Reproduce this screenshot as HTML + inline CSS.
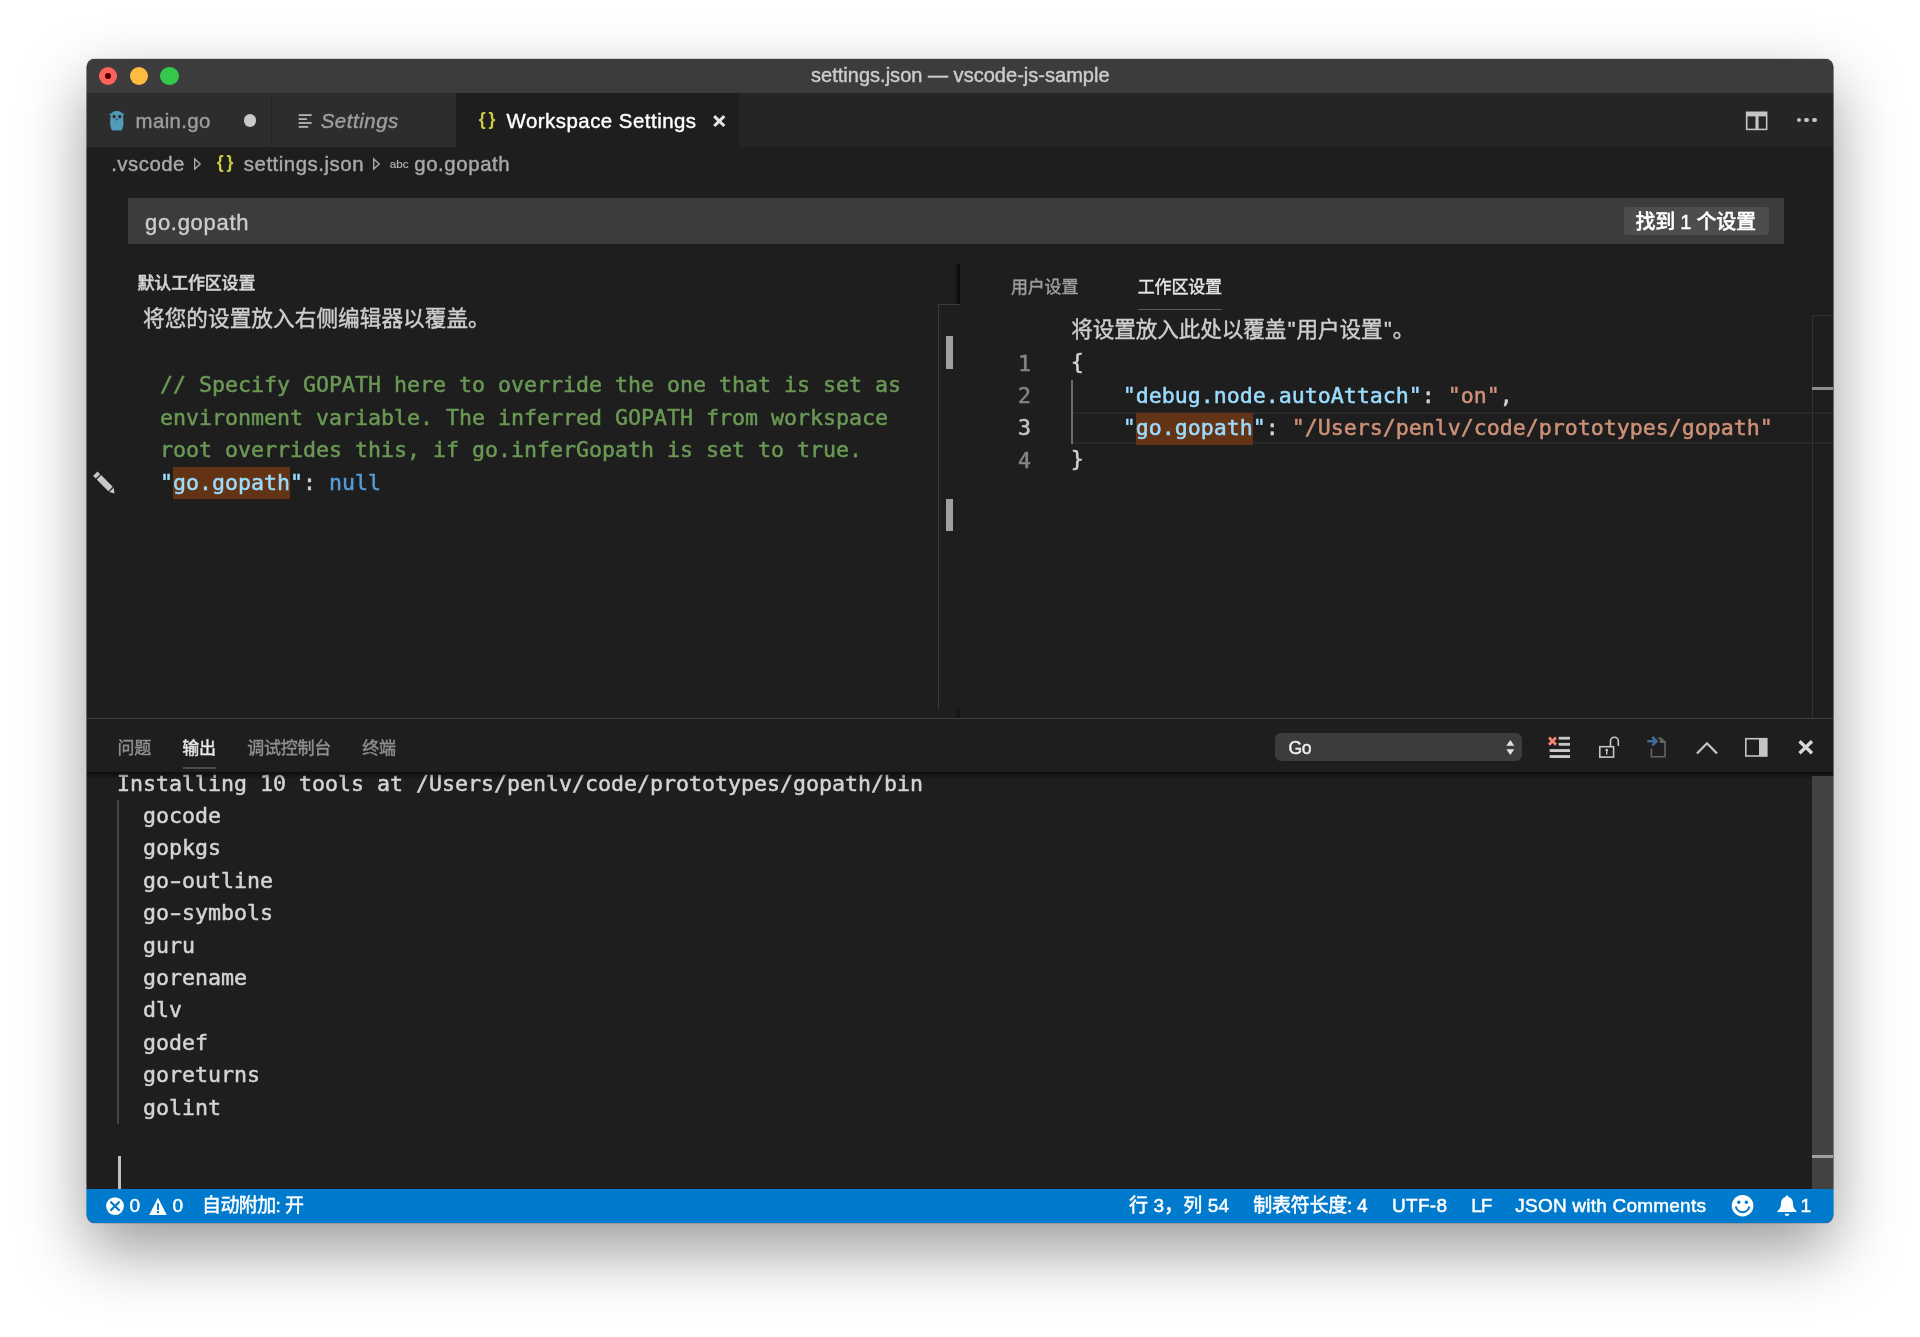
<!DOCTYPE html>
<html lang="zh-CN">
<head>
<meta charset="utf-8">
<title>settings.json — vscode-js-sample</title>
<style>
html,body{margin:0;padding:0;}
body{width:1920px;height:1337px;background:#fff;position:relative;overflow:hidden;
  font-family:"Liberation Sans","Noto Sans CJK SC",sans-serif;-webkit-font-smoothing:antialiased;}
#shadow{position:absolute;left:87px;top:59px;width:1746px;height:1164px;border-radius:7.5px;
  box-shadow:0 0 0 1px rgba(0,0,0,.12),0 27px 66px 0 rgba(0,0,0,.40);}
#win{position:absolute;left:87px;top:59px;width:1746px;height:1164px;border-radius:7.5px;overflow:hidden;background:#1e1e1e;}
#c{position:absolute;left:-87px;top:-59px;width:1920px;height:1337px;will-change:transform;}
#c div,#c span,#c svg{position:absolute;}
.t{white-space:pre;line-height:1;font-size:20.06px;color:#ccc;-webkit-text-stroke:.42px currentColor;}
.m{white-space:pre;font-family:"DejaVu Sans Mono","Liberation Mono",monospace;font-size:21.6px;line-height:32.4px;color:#d4d4d4;-webkit-text-stroke:.5px currentColor;}
.m span,.t span{position:static !important;}
/* colours */
.cm{color:#6a9955}.ky{color:#9cdcfe}.st{color:#ce9178}.kw{color:#569cd6}.pn{color:#d4d4d4}
.hl{background:#623315}
.s{font-size:19px !important;color:#fff !important;-webkit-text-stroke:.5px #fff !important;}
</style>
</head>
<body>
<div id="shadow"></div>
<div id="edges" style="position:absolute;left:0;top:0;opacity:.5;">
<div style="position:absolute;left:86px;top:66px;width:1px;height:27px;background:#3c3c3c;"></div>
<div style="position:absolute;left:86px;top:93px;width:1px;height:54px;background:#2d2d2d;"></div>
<div style="position:absolute;left:86px;top:147px;width:1px;height:1042px;background:#1e1e1e;"></div>
<div style="position:absolute;left:86px;top:1189px;width:1px;height:27px;background:#007acc;"></div>
<div style="position:absolute;left:1833px;top:66px;width:1px;height:27px;background:#3c3c3c;"></div>
<div style="position:absolute;left:1833px;top:93px;width:1px;height:54px;background:#252526;"></div>
<div style="position:absolute;left:1833px;top:147px;width:1px;height:629px;background:#1e1e1e;"></div>
<div style="position:absolute;left:1833px;top:776px;width:1px;height:413px;background:#424242;"></div>
<div style="position:absolute;left:1833px;top:1189px;width:1px;height:27px;background:#007acc;"></div>
</div>
<div id="win"><div id="c">

<!-- ===== title bar ===== -->
<div style="left:87px;top:59px;width:1747px;height:34px;background:#3c3c3c;"></div>
<div style="left:98.8px;top:66.6px;width:18.4px;height:18.4px;border-radius:50%;background:#fc615d;"></div>
<div style="left:104.9px;top:72.7px;width:6.2px;height:6.2px;border-radius:50%;background:#4d0000;"></div>
<div style="left:129.5px;top:66.6px;width:18.4px;height:18.4px;border-radius:50%;background:#fdbc40;"></div>
<div style="left:160.4px;top:66.6px;width:18.4px;height:18.4px;border-radius:50%;background:#34c84a;"></div>
<span class="t" id="title" style="left:811px;top:65px;color:#cccccc;">settings.json — vscode-js-sample</span>

<!-- ===== tab bar ===== -->
<div style="left:87px;top:93px;width:1747px;height:54px;background:#252526;"></div>
<div style="left:87px;top:93px;width:184px;height:54px;background:#2d2d2d;"></div>
<div style="left:272px;top:93px;width:184px;height:54px;background:#2d2d2d;"></div>
<div style="left:456px;top:93px;width:283px;height:54px;background:#1e1e1e;"></div>

<!-- tabs -->
<!-- tab separators -->
<div style="left:270.5px;top:93px;width:1.5px;height:54px;background:#252526;"></div>
<!-- go gopher icon -->
<svg style="left:102px;top:105px;" width="30" height="30" viewBox="0 0 1337 1337">
  <path fill="#519aba" d="M470 335C520 285 600 268 660 268C720 268 800 285 860 335C890 350 905 375 920 385C950 365 995 385 990 420C985 450 955 455 935 450C945 560 950 700 955 800C975 815 975 850 950 860C945 950 920 1050 880 1110C860 1140 820 1140 790 1125C740 1140 580 1140 530 1125C500 1140 460 1140 440 1110C400 1050 375 950 370 860C345 850 345 815 365 800C370 700 375 560 385 450C365 455 335 450 330 420C325 385 370 365 400 385C415 375 440 350 470 335Z"/>
  <ellipse cx="540" cy="520" rx="70" ry="80" fill="#2d2d2d"/><ellipse cx="790" cy="520" rx="70" ry="80" fill="#2d2d2d"/>
  <ellipse cx="660" cy="652" rx="46" ry="25" fill="#2d2d2d"/>
</svg>
<span class="t" id="tab1" style="left:135.5px;top:111.2px;font-size:20.4px;color:#9e9e9e;letter-spacing:.4px;">main.go</span>
<div style="left:243.7px;top:114.2px;width:12.6px;height:12.6px;border-radius:50%;background:#c8c8c8;"></div>
<!-- settings list icon -->
<svg style="left:298px;top:113px;" width="15" height="16" viewBox="0 0 15 16">
  <g fill="#c5c5c5"><rect x=".7" y="1.300" width="13" height="1.600"/><rect x=".7" y="5.300" width="8.2" height="1.600"/><rect x=".7" y="9.200" width="13" height="1.600"/><rect x=".7" y="13.100" width="9.500" height="1.600"/></g>
</svg>
<span class="t" id="tab2" style="left:320.7px;top:111.2px;font-size:20.4px;color:#9e9e9e;font-style:italic;letter-spacing:.55px;">Settings</span>
<span class="t" id="tab3i" style="left:478.7px;top:111.1px;color:#cbcb41;font-size:17.7px;letter-spacing:-1.05px;font-weight:bold;-webkit-text-stroke:0;">{ }</span>
<span class="t" id="tab3" style="left:506.6px;top:111.2px;font-size:20.4px;color:#ffffff;letter-spacing:.5px;">Workspace Settings</span>
<svg style="left:712px;top:113.5px;" width="15" height="14" viewBox="0 0 15 14"><path d="M2.2 2.200L12.300 12M12.300 2.200L2.200 12" stroke="#e4e4e4" stroke-width="3.100" fill="none"/></svg>
<!-- editor actions -->
<svg style="left:1743.5px;top:109.8px;" width="25" height="22" viewBox="0 0 24 22" preserveAspectRatio="none">
  <path d="M1.800 1.500h20.700v18.700H1.800z" fill="#c5c5c5"/><rect x="3.400" y="6.400" width="7.600" height="12.200" fill="#252526"/><rect x="14" y="6.400" width="7" height="12.200" fill="#252526"/>
</svg>
<div style="left:1796.5px;top:117.6px;width:4.5px;height:4.5px;border-radius:50%;background:#c5c5c5;"></div>
<div style="left:1804.3px;top:117.6px;width:4.5px;height:4.5px;border-radius:50%;background:#c5c5c5;"></div>
<div style="left:1812px;top:117.6px;width:4.5px;height:4.5px;border-radius:50%;background:#c5c5c5;"></div>


<!-- breadcrumb -->
<span class="t" id="bc1" style="left:111.2px;top:154.3px;font-size:20.4px;color:#a9a9a9;letter-spacing:.5px;">.vscode</span>
<svg style="left:193px;top:157px;" width="9" height="14" viewBox="0 0 9 14"><path d="M1.700 1.900L7.200 7 1.700 12.100z" fill="none" stroke="#a9a9a9" stroke-width="1.400" stroke-linejoin="miter"/></svg>
<span class="t" id="bc2i" style="left:216.7px;top:154.4px;color:#cbcb41;font-size:17.7px;letter-spacing:-1.05px;font-weight:bold;-webkit-text-stroke:0;">{ }</span>
<span class="t" id="bc2" style="left:243.8px;top:154.3px;font-size:20.4px;color:#a9a9a9;letter-spacing:.53px;">settings.json</span>
<svg style="left:372px;top:157px;" width="9" height="14" viewBox="0 0 9 14"><path d="M1.700 1.900L7.200 7 1.700 12.100z" fill="none" stroke="#a9a9a9" stroke-width="1.400" stroke-linejoin="miter"/></svg>
<span class="t" id="bc3i" style="left:389.7px;top:158.2px;color:#b4b4b4;font-size:11.6px;letter-spacing:.1px;-webkit-text-stroke:.2px currentColor;">abc</span>
<span class="t" id="bc3" style="left:414.2px;top:154.3px;font-size:20.4px;color:#a9a9a9;letter-spacing:.6px;">go.gopath</span>


<!-- search -->
<div style="left:128px;top:197.5px;width:1656px;height:46.500px;background:#3c3c3c;"></div>
<span class="t" id="sq" style="left:145px;top:211.8px;color:#cccccc;font-size:22px;letter-spacing:.7px;">go.gopath</span>
<div style="left:1624px;top:207px;width:145px;height:27.7px;background:#4d4d4d;border-radius:3px;"></div>
<span class="t" id="badge" style="left:1635.5px;top:212px;color:#ffffff;font-size:20.06px;letter-spacing:-.3px;font-weight:500;">找到 1 个设置</span>


<!-- left -->
<span class="t" id="l_title" style="left:137.5px;top:275.3px;color:#d4d4d4;font-size:17px;font-weight:500;letter-spacing:-.18px;">默认工作区设置</span>
<span class="t" id="l_sub" style="left:143px;top:308.3px;color:#cecece;font-size:21.6px;letter-spacing:.08px;">将您的设置放入右侧编辑器以覆盖。</span>
<div class="hl" style="left:173px;top:466.5px;width:117px;height:32.2px;"></div>
<div class="m" id="l_code" style="left:160px;top:369.4px;"><span class="cm">// Specify GOPATH here to override the one that is set as</span>
<span class="cm">environment variable. The inferred GOPATH from workspace</span>
<span class="cm">root overrides this, if go.inferGopath is set to true.</span>
<span class="ky">"go.gopath"</span><span class="pn">: </span><span class="kw">null</span></div>
<!-- pencil -->
<svg style="left:86px;top:464px;" width="36" height="36" viewBox="0 0 36 36">
  <g transform="translate(18.9 19.3) rotate(45)" fill="#c8c8c8">
    <rect x="-13.6" y="-3.1" width="3.8" height="6.2"/>
    <rect x="-8.5" y="-3.1" width="16.5" height="6.2"/>
    <path d="M9.3 -3.1L14 .4L9.3 3.1z"/>
  </g>
</svg>
<!-- left overview ruler -->
<div style="left:938px;top:304px;width:1px;height:405px;background:#3a3a3a;"></div>
<div style="left:938px;top:304px;width:22px;height:1px;background:#3a3a3a;"></div>
<div style="left:946px;top:336.2px;width:7.2px;height:32.6px;background:#a0a0a0;"></div>
<div style="left:946px;top:498.8px;width:7.2px;height:32.4px;background:#a0a0a0;"></div>
<!-- sash shadow -->
<div style="left:954px;top:264px;width:6px;height:40px;background:linear-gradient(to right,rgba(0,0,0,0),rgba(0,0,0,.7));"></div>
<div style="left:955px;top:709px;width:5px;height:9px;background:linear-gradient(to right,rgba(0,0,0,0),rgba(0,0,0,.35));"></div>


<!-- right -->
<span class="t" id="r_tab1" style="left:1011px;top:279.4px;color:#9d9d9d;font-size:17px;letter-spacing:-.19px;">用户设置</span>
<span class="t" id="r_tab2" style="left:1137.8px;top:279.4px;color:#e7e7e7;font-size:17px;letter-spacing:-.2px;">工作区设置</span>
<div style="left:1138px;top:309px;width:84px;height:1.3px;background:#5a5a5a;"></div>
<span class="t" id="r_sub" style="left:1071.2px;top:319.3px;color:#cecece;font-size:21.6px;letter-spacing:-.08px;">将设置放入此处以覆盖<span style="padding:0 1.3px">"</span>用户设置<span style="padding:0 1.3px">"</span>。</span>
<!-- current line -->
<div style="left:1071px;top:412px;width:763px;height:32.4px;box-sizing:border-box;border-top:2px solid #282828;border-bottom:2px solid #282828;"></div>
<div class="hl" style="left:1136px;top:412.6px;width:117px;height:32.2px;"></div>
<div style="left:1071.300px;top:379.600px;width:1.600px;height:64.800px;background:#6e6e6e;"></div>
<div class="m" id="r_ln" style="left:1005px;top:347.6px;width:26px;text-align:right;color:#858585;">1
2
<span style="color:#c6c6c6">3</span>
4</div>
<div class="m" id="r_code" style="left:1070.7px;top:347.6px;"><span class="pn" style="position:relative !important;top:-1.8px;">{</span>
    <span class="ky">"debug.node.autoAttach"</span><span class="pn">: </span><span class="st">"on"</span><span class="pn">,</span>
    <span class="ky">"go.gopath"</span><span class="pn">: </span><span class="st">"/Users/penlv/code/prototypes/gopath"</span>
<span class="pn" style="position:relative !important;top:-1.8px;">}</span></div>
<!-- right overview ruler -->
<div style="left:1811.5px;top:315px;width:1.3px;height:404px;background:#333333;"></div>
<div style="left:1811.5px;top:315px;width:23px;height:1.3px;background:#333333;"></div>
<div style="left:1812px;top:386.8px;width:22px;height:3px;background:#8c8c8c;"></div>


<!-- panel -->
<div style="left:87px;top:717.600px;width:1747px;height:1.5px;background:#414141;"></div>
<span class="t" id="p_t1" style="left:117.5px;top:740.1px;color:#8f8f8f;font-size:17px;letter-spacing:-.2px;">问题</span>
<span class="t" id="p_t2" style="left:182.2px;top:740.1px;color:#e7e7e7;font-size:17px;letter-spacing:-.2px;">输出</span>
<div style="left:182.5px;top:767px;width:33.5px;height:2px;background:#4c4c4c;"></div>
<span class="t" id="p_t3" style="left:247.2px;top:740.1px;color:#8f8f8f;font-size:17px;letter-spacing:-.25px;">调试控制台</span>
<span class="t" id="p_t4" style="left:362.2px;top:740.1px;color:#8f8f8f;font-size:17px;letter-spacing:-.2px;">终端</span>
<!-- dropdown -->
<div style="left:1275px;top:733.2px;width:247px;height:27.600px;background:#3c3c3c;border-radius:6px;"></div>
<span class="t" id="p_go" style="left:1288.6px;top:739.5px;color:#f0f0f0;font-size:17.6px;letter-spacing:-.6px;">Go</span>
<svg style="left:1505px;top:739px;" width="11" height="17" viewBox="0 0 11 17"><path d="M5.300 1L9.300 6.700H1.300zM5.300 16L9.300 10.300H1.300z" fill="#e0e0e0"/></svg>
<!-- clear output -->
<svg style="left:1546px;top:735px;" width="26" height="25" viewBox="0 0 26 25">
  <path d="M3 2.500l7 7.300M10 2.500l-7 7.300" stroke="#f48771" stroke-width="2.700" fill="none"/>
  <g fill="#c8c8c8"><rect x="12.700" y="1.800" width="11.300" height="2.800"/><rect x="12.700" y="7.900" width="11.300" height="2.800"/><rect x="3.600" y="14.100" width="20.400" height="2.900"/><rect x="3.600" y="20.100" width="20.400" height="2.900"/></g>
</svg>
<!-- lock -->
<svg style="left:1597px;top:735px;" width="24" height="25" viewBox="0 0 24 25">
  <rect x="2.800" y="11.700" width="13.800" height="10.400" fill="none" stroke="#c5c5c5" stroke-width="1.600"/>
  <path d="M13.500 11.500V6.100a3.900 3.900 0 0 1 7.800 0v4.800" fill="none" stroke="#c5c5c5" stroke-width="1.600"/>
  <circle cx="9.700" cy="15.100" r="1.300" fill="#c5c5c5"/><rect x="9" y="15" width="1.400" height="4.500" fill="#c5c5c5"/>
</svg>
<!-- open log file -->
<svg style="left:1645.5px;top:734.5px;" width="22" height="25" viewBox="0 0 22 25">
  <path d="M5.400 13.500v8.200h13.600V6.900L14.800 3.200H12" fill="none" stroke="#656565" stroke-width="1.600"/>
  <path d="M13.800 2.400v5.500h6z" fill="#656565"/>
  <path d="M1.300 6.200h8.500M6.300 2l4.200 4.200-4.200 4.200" fill="none" stroke="#3f6e9a" stroke-width="2.500"/>
</svg>
<!-- chevron up -->
<svg style="left:1695px;top:740px;" width="24" height="16" viewBox="0 0 24 16"><path d="M2 13.500L12 3.300 22 13.500" fill="none" stroke="#c5c5c5" stroke-width="2.300"/></svg>
<!-- panel position -->
<svg style="left:1744px;top:737px;" width="25" height="21" viewBox="0 0 25 21"><rect x="1.800" y="1.700" width="21" height="17.300" fill="none" stroke="#c5c5c5" stroke-width="1.600"/><rect x="15" y="1.700" width="7.800" height="17.300" fill="#c5c5c5"/></svg>
<!-- close -->
<svg style="left:1797px;top:739px;" width="18" height="17" viewBox="0 0 18 17"><path d="M2.500 2.300L15 14.300M15 2.300L2.500 14.300" stroke="#d8d8d8" stroke-width="3.400" fill="none"/></svg>
<!-- output -->
<div style="left:117px;top:799.5px;width:2px;height:324.5px;background:#444444;"></div>
<div class="m" id="p_out" style="left:117px;top:767.5px;">Installing 10 tools at /Users/penlv/code/prototypes/gopath/bin
  gocode
  gopkgs
  go<span style="display:inline-block;transform:scaleX(1.55);">-</span>outline
  go<span style="display:inline-block;transform:scaleX(1.55);">-</span>symbols
  guru
  gorename
  dlv
  godef
  goreturns
  golint</div>
<div style="left:87px;top:772px;width:1747px;height:7px;background:linear-gradient(to bottom,rgba(0,0,0,.55),rgba(0,0,0,0));"></div>
<div style="left:117.5px;top:1156.2px;width:3px;height:32.8px;background:#c0c0c0;"></div>
<div style="left:1812px;top:776px;width:22px;height:413px;background:#424242;"></div>
<div style="left:1812px;top:1155px;width:22px;height:3px;background:#a0a0a0;"></div>


<!-- status -->
<div style="left:87px;top:1188.8px;width:1747px;height:36px;background:#007acc;"></div>
<!-- error icon -->
<svg style="left:105px;top:1196.4px;" width="20" height="20" viewBox="0 0 20 20"><circle cx="10" cy="10.1" r="8.9" fill="#fff"/><path d="M6.1 6.2l7.800 7.800M13.900 6.200l-7.800 7.800" stroke="#007acc" stroke-width="2.200" stroke-linecap="round" fill="none"/></svg>
<span class="t s" id="s_e" style="left:129.5px;top:1196.4px;">0</span>
<svg style="left:148px;top:1196px;" width="20" height="20" viewBox="0 0 20 20"><path d="M10 1.800L18.800 19H1.200z" fill="#fff"/><rect x="9" y="7.500" width="2" height="6.500" fill="#007acc"/><rect x="9" y="15" width="2" height="2.200" fill="#007acc"/></svg>
<span class="t s" id="s_w" style="left:172.5px;top:1196.4px;">0</span>
<span class="t s" id="s_auto" style="left:202px;top:1196.4px;letter-spacing:-.6px;">自动附加: 开</span>
<span class="t s" id="s_pos" style="left:1129px;top:1196.4px;letter-spacing:.1px;">行 3，列 54</span>
<span class="t s" id="s_tab" style="left:1253.3px;top:1196.4px;letter-spacing:-.25px;">制表符长度: 4</span>
<span class="t s" id="s_enc" style="left:1392px;top:1196.4px;letter-spacing:.3px;">UTF-8</span>
<span class="t s" id="s_eol" style="left:1471.2px;top:1196.4px;letter-spacing:-1.1px;">LF</span>
<span class="t s" id="s_lang" style="left:1515.3px;top:1196.4px;letter-spacing:.22px;">JSON with Comments</span>
<!-- smiley -->
<svg style="left:1731px;top:1194px;" width="24" height="24" viewBox="0 0 24 24"><circle cx="11.600" cy="11.700" r="10.800" fill="#fff"/><circle cx="7.800" cy="8.300" r="1.700" fill="#007acc"/><circle cx="15.400" cy="8.300" r="1.700" fill="#007acc"/><path d="M4.800 12.500a6.900 6.900 0 0 0 13.600 0" fill="none" stroke="#007acc" stroke-width="2"/></svg>
<!-- bell -->
<svg style="left:1776px;top:1194px;" width="22" height="24" viewBox="0 0 22 24"><path d="M11 1.500c1 0 1.500.6 1.600 1.600 3.200.9 4.400 3.600 4.500 6.800.1 3 .8 5 3.400 7.100v1H1.500v-1c2.600-2.100 3.300-4.100 3.400-7.100.1-3.200 1.300-5.900 4.500-6.800.1-1 .6-1.600 1.600-1.600z" fill="#fff"/><path d="M8.700 19.700h4.600a2.300 2.300 0 0 1-4.600 0z" fill="#fff"/></svg>
<span class="t s" id="s_n" style="left:1800.500px;top:1196.4px;">1</span>


</div></div>
</body>
</html>
